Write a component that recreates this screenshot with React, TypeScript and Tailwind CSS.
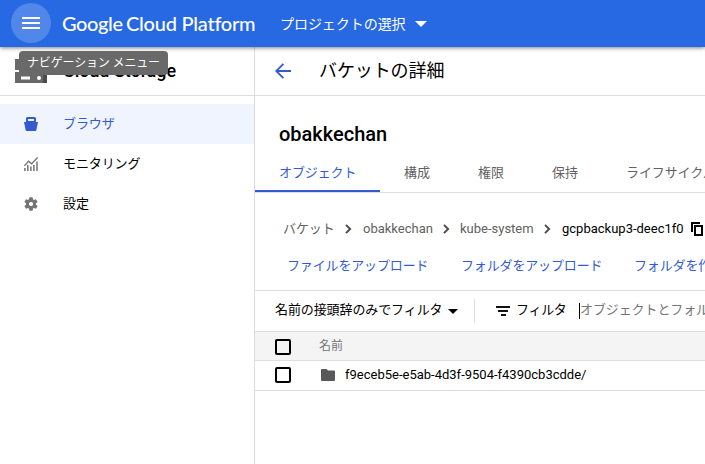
import React from "react";

function Caret({ className }: { className?: string }) {
  return (
    <svg viewBox="0 0 10 5" className={`shrink-0 ${className}`} fill="currentColor">
      <path d="M0 0h10L5 5z" />
    </svg>
  );
}

function Chevron({ className }: { className: string }) {
  return (
    <svg viewBox="0 0 7 10" className={`h-[10px] w-[7px] shrink-0 ${className}`} fill="none" stroke="#4d4d4d" strokeWidth="2">
      <path d="M1 .9 5.1 5 1 9.1" />
    </svg>
  );
}

function BucketIcon() {
  return (
    <svg viewBox="0 0 14 14" className="h-[14px] w-[14px]" fill="#335bcf">
      <path fillRule="evenodd" d="M3.500 0h7q1.500 0 1.500 1.500V5h2l-1.600 8q-.2 1-1.200 1H2.800q-1 0-1.200-1L0 5h2V1.500Q2 0 3.500 0zM4 2h6v2H4z" />
    </svg>
  );
}

function MonitoringIcon() {
  return (
    <svg viewBox="0 0 14 14" className="h-[14px] w-[14px]" fill="none" stroke="#757575">
      <path strokeWidth="1.300" d="M.4 8.800 4.600 4.200l3 2.600L13.600.500" />
      <path strokeWidth="1.500" d="M.9 11v3M3.800 8v6M6.900 9.500V14M9.900 8v6M13 4.500V14" />
    </svg>
  );
}

function GearIcon() {
  return (
    <svg viewBox="2 2 20 20" className="h-[14px] w-[14px]" fill="#757575">
      <path d="M19.140 12.940c.04-.3.060-.61.060-.94 0-.32-.02-.64-.07-.94l2.030-1.580c.18-.14.23-.41.120-.61l-1.920-3.320c-.12-.22-.37-.29-.59-.22l-2.390.96c-.5-.38-1.030-.7-1.620-.94l-.36-2.540c-.04-.24-.24-.41-.48-.41h-3.840c-.24 0-.43.17-.47.41l-.36 2.540c-.59.24-1.130.57-1.620.94l-2.390-.96c-.22-.08-.47 0-.59.22L2.740 8.870c-.12.21-.08.47.12.61l2.030 1.580c-.05.3-.09.63-.09.94s.02.64.07.94l-2.030 1.580c-.18.14-.23.41-.12.61l1.920 3.320c.12.22.37.29.59.22l2.390-.96c.5.38 1.030.7 1.620.94l.36 2.540c.05.24.24.41.48.41h3.840c.24 0 .44-.17.47-.41l.36-2.540c.59-.24 1.130-.56 1.620-.94l2.390.96c.22.08.47 0 .59-.22l1.920-3.320c.12-.22.07-.47-.12-.61l-2.010-1.580zM12 15A3 3 0 1 1 12 9a3 3 0 0 1 0 6z" />
    </svg>
  );
}

function Checkbox() {
  return <span className="h-4 w-4 shrink-0 rounded-[2px] border-2 border-black" />;
}

const navItems = [
  { label: "ブラウザ", icon: <BucketIcon />, active: true },
  { label: "モニタリング", icon: <MonitoringIcon />, active: false },
  { label: "設定", icon: <GearIcon />, active: false },
];

const tabs = ["構成", "権限", "保持"];

export default function App() {
  return (
    <div className="flex h-[464px] w-[705px] flex-col overflow-hidden bg-white font-[Roboto,'Noto_Sans_CJK_JP',sans-serif] text-[13px] whitespace-nowrap text-black">
      <header className="relative z-10 flex h-[47px] shrink-0 items-center bg-[#2669e2] text-white shadow-[0_1px_4px_rgba(0,0,0,0.5)]">
        <button className="relative mb-px ml-[11px] flex h-10 w-10 shrink-0 items-center justify-center rounded-full bg-[#5187e8]">
          <svg viewBox="0 0 18 12" className="h-3 w-[18px]" fill="#fff">
            <path d="M0 0h18v2H0zM0 5h18v2H0zM0 10h18v2H0z" />
          </svg>
          <span className="absolute top-[48px] left-[8px] flex h-6 w-[149px] items-center rounded-[4px] bg-[#696969] pl-[8px] text-[12px] leading-none tracking-[-0.15px] text-white">
            <span className="-mt-px">ナビゲーション メニュー</span>
          </span>
        </button>
        <div className="-mt-[2px] ml-[11px] flex w-[218px] shrink-0 items-baseline font-[Lato,sans-serif] text-[20px] leading-6 font-medium">
          <span className="w-[64px] tracking-[-0.4px]">Google</span>
          <span className="tracking-[-0.25px]">Cloud Platform</span>
        </div>
        <span className="text-[14px] leading-none tracking-[-0.05px]">プロジェクトの選択</span>
        <Caret className="ml-[9px] h-[6px] w-[12px]" />
      </header>

      <div className="flex min-h-0 flex-1">
        <aside className="flex w-[255px] shrink-0 flex-col border-r border-[#dadada]">
          <div className="flex h-[49px] items-center border-b border-[#dedede] pl-[15px]">
            <svg viewBox="0 0 32 24" className="h-6 w-8">
              <path fill="#696969" d="M0 0h32v11H0zM0 13h32v11H0z" />
              <path fill="#4d4d4d" d="M28 13h4v11h-4z" />
              <path fill="#fff" d="M6 17.500h9v3H6z" />
              <circle cx="24" cy="19" r="2" fill="#fff" />
            </svg>
            <span className="-mt-[2px] ml-4 text-[18px] font-medium tracking-[-0.05px]">Cloud Storage</span>
          </div>
          <nav className="mt-2">
            {navItems.map((item) => (
              <a
                key={item.label}
                className={`flex h-10 items-center pl-6 ${item.active ? "bg-[#eff4fe] text-[#335bcf]" : "text-black"}`}
              >
                {item.icon}
                <span className="-mt-px ml-[25px] tracking-[-0.1px]">{item.label}</span>
              </a>
            ))}
          </nav>
        </aside>

        <main className="flex min-w-0 flex-1 flex-col overflow-hidden">
          <div className="flex h-[49px] shrink-0 items-center border-b border-[#dedede] pl-5">
            <svg viewBox="0 0 16 16" className="h-4 w-4" fill="none" stroke="#335bcf" strokeWidth="1.800">
              <path d="M16 8H1.500M8.400.800 1.200 8l7.200 7.200" />
            </svg>
            <span className="-mt-[2px] ml-[28px] text-[18px] tracking-[-0.1px]">バケットの詳細</span>
          </div>

          <h1 className="mt-[24px] ml-6 h-7 text-[20px] leading-7 font-medium">obakkechan</h1>

          <div className="mt-[5px] flex h-[40px] shrink-0 border-b border-[#dedede] tracking-[-0.1px] text-[#616161]">
            <div className="flex w-[125px] shrink-0 items-center border-b-2 border-[#335bcf] pt-[2px] pl-6 text-[#335bcf]">
              オブジェクト
            </div>
            {tabs.map((tab) => (
              <div key={tab} className="flex w-[74px] shrink-0 items-center border-b-2 border-transparent pt-[2px] pl-6">
                {tab}
              </div>
            ))}
            <div className="flex shrink-0 items-center border-b-2 border-transparent pt-[2px] pl-6">ライフサイクル</div>
          </div>

          <div className="mt-[26px] flex h-5 shrink-0 items-center pl-[28px] text-[#616161]">
            <span className="w-[52px] shrink-0 tracking-[-0.1px]">バケット</span>
            <Chevron className="ml-[10px]" />
            <span className="ml-[11px] w-[70px] shrink-0">obakkechan</span>
            <Chevron className="ml-[10px]" />
            <span className="ml-[10px] w-[75px] shrink-0">kube-system</span>
            <Chevron className="ml-[9px]" />
            <span className="ml-[11px] w-[122px] shrink-0 text-black">gcpbackup3-deec1f0</span>
            <svg viewBox="0 0 12 14" className="ml-[7px] h-[14px] w-3 shrink-0" fill="none" stroke="#000" strokeWidth="2">
              <path d="M1 10V1h8" />
              <path d="M4 4h7v9H4z" />
            </svg>
          </div>

          <div className="mt-[14px] flex h-[38px] shrink-0 border-b border-[#dedede] pl-8 tracking-[-0.15px] text-[#335bcf]">
            <span className="w-[174px] shrink-0 leading-[25px]">ファイルをアップロード</span>
            <span className="w-[173px] shrink-0 leading-[25px]">フォルダをアップロード</span>
            <span className="shrink-0 leading-[25px]">フォルダを作成</span>
          </div>

          <div className="flex h-[41px] shrink-0 items-center border-b border-[#dedede] pl-5 tracking-[-0.1px]">
            <span className="-mt-[2px] w-[173px] shrink-0">名前の接頭辞のみでフィルタ</span>
            <Caret className="h-[5px] w-[10px]" />
            <span className="ml-[16px] h-6 w-px shrink-0 bg-[#dedede]" />
            <svg viewBox="0 0 14 10" className="ml-[21px] h-[10px] w-[14px] shrink-0" fill="#111">
              <path d="M0 0h14v2H0zM2 4h10v2H2zM5 8h5v2H5z" />
            </svg>
            <span className="-mt-[2px] ml-[6px] w-[63px] shrink-0 tracking-[-0.3px]">フィルタ</span>
            <span className="h-4 w-px shrink-0 bg-black" />
            <span className="-mt-[2px] shrink-0 text-[#757575]">オブジェクトとフォルダをフィルタ</span>
          </div>

          <div className="flex h-[29px] shrink-0 items-center border-b border-[#dedede] bg-[#f4f4f4] pt-px pl-5 text-[12px] text-[#757575]">
            <Checkbox />
            <span className="-mt-[2px] ml-7">名前</span>
          </div>
          <div className="flex h-[30px] shrink-0 items-center border-b border-[#dedede] pb-px pl-5">
            <Checkbox />
            <svg viewBox="0 0 14 12" className="ml-[30px] h-3 w-[14px]" fill="#595959">
              <path d="M1 0h4.500L7 1.600h6q1 0 1 1V11q0 1-1 1H1q-1 0-1-1V1q0-1 1-1z" />
            </svg>
            <span className="ml-[10px]">f9eceb5e-e5ab-4d3f-9504-f4390cb3cdde/</span>
          </div>
        </main>
      </div>
    </div>
  );
}
